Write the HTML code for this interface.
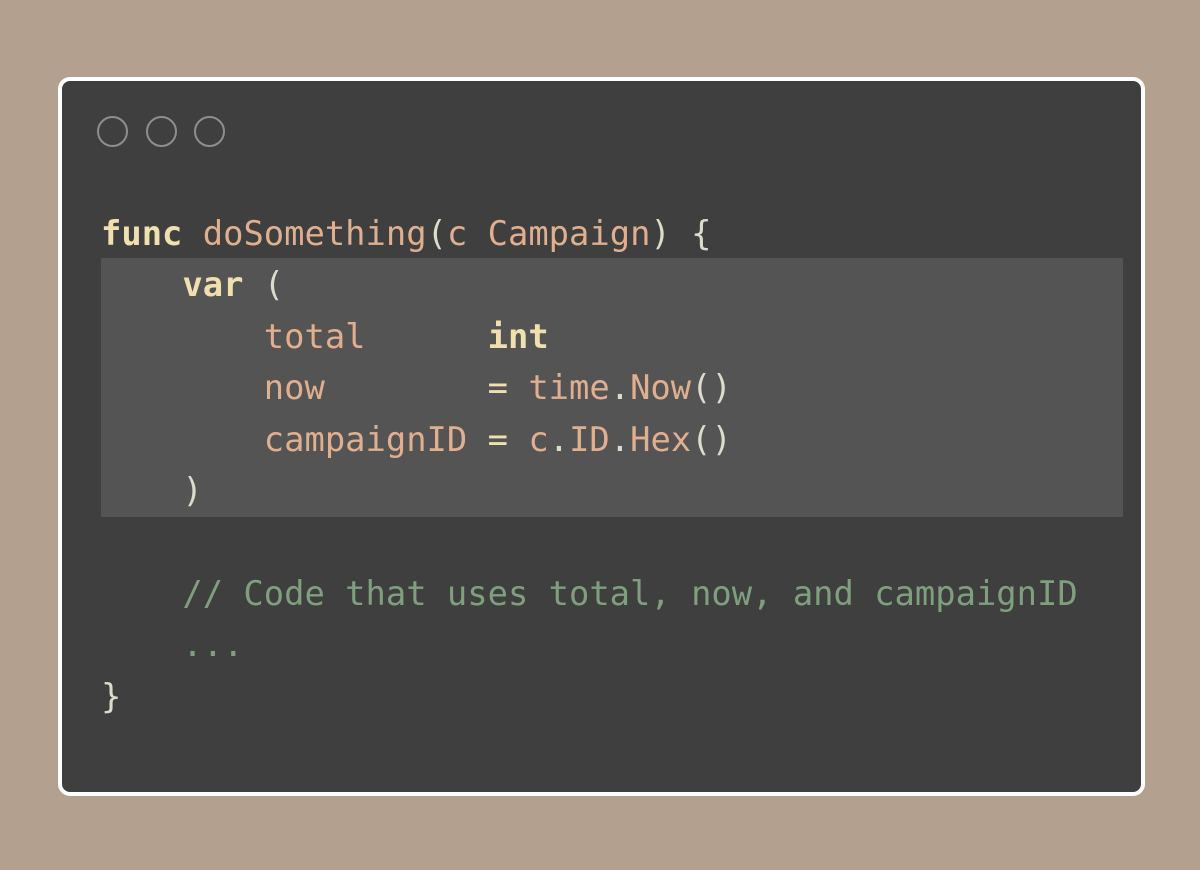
<!DOCTYPE html>
<html><head><meta charset="utf-8"><style>
html,body{margin:0;padding:0;}
body{width:1200px;height:870px;background:#b4a08e;position:relative;overflow:hidden;}
.card{position:absolute;left:58px;top:77px;width:1079px;height:711px;background:#3f3f3f;border:4px solid #fff;border-radius:12px;}
.dot{position:absolute;top:35px;width:31px;height:31px;border:2px solid #8e8e8a;border-radius:50%;box-sizing:border-box;}
.hl{position:absolute;left:39px;top:177px;width:1022px;height:259px;background:#545454;}
pre{position:absolute;left:39px;top:127px;margin:0;font-family:"DejaVu Sans Mono","Liberation Mono",monospace;font-size:33.8px;line-height:51.4px;color:#dcdccc;}
.k{color:#f0dfaf;font-weight:bold}
.o{color:#f0dfaf}
.i{color:#dfaf8f}
.c{color:#7f9f7f}
</style></head><body>
<div class="card">
<div class="dot" style="left:35px"></div>
<div class="dot" style="left:84px"></div>
<div class="dot" style="left:132px"></div>
<div class="hl"></div>
<pre><span class="k">func</span> <span class="i">doSomething</span>(<span class="i">c Campaign</span>) {
    <span class="k">var</span> (
        <span class="i">total</span>      <span class="k">int</span>
        <span class="i">now</span>        <span class="o">=</span> <span class="i">time</span>.<span class="i">Now</span>()
        <span class="i">campaignID</span> <span class="o">=</span> <span class="i">c</span>.<span class="i">ID</span>.<span class="i">Hex</span>()
    )

    <span class="c">// Code that uses total, now, and campaignID</span>
    <span class="c">...</span>
}</pre>
</div>
</body></html>
